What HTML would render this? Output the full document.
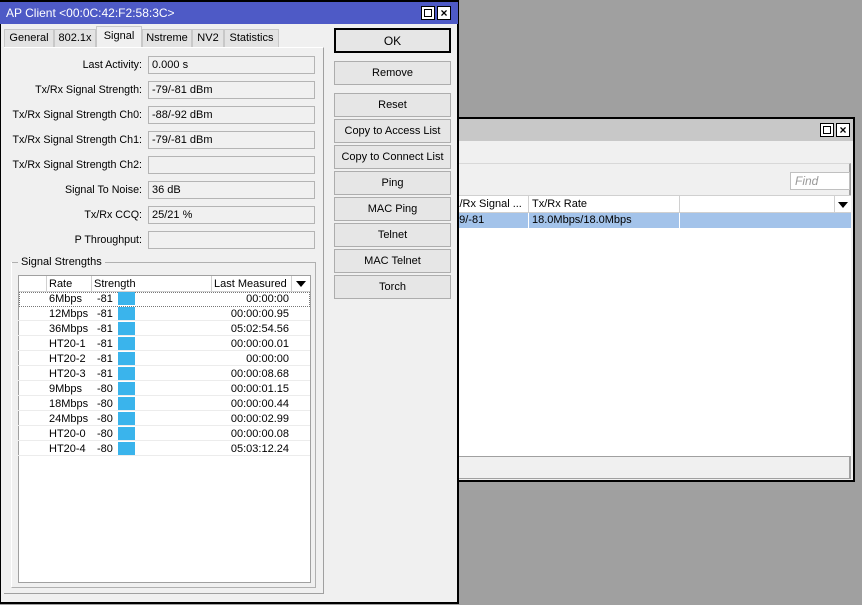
<!DOCTYPE html>
<html><head><meta charset="utf-8"><style>
*{box-sizing:border-box;margin:0;padding:0}
body{width:862px;height:605px;background:#a0a0a0;position:relative;overflow:hidden;font-family:"Liberation Sans",sans-serif;font-size:11px;color:#000}
.a{position:absolute}
.btn{position:absolute;left:333px;width:117px;height:24px;border:1px solid #adadad;background:#e6e6e6;text-align:center;line-height:22px;font-size:11px}
.lbl{position:absolute;right:6px;text-align:right;width:140px;font-size:10.7px;white-space:nowrap}
.fld{position:absolute;left:147px;width:167px;height:18px;border:1px solid #b4b4b4;background:#f0f0f0;padding-left:3px;line-height:16px}
.tb{position:absolute;top:1px;height:18px;border:1px solid #c8c8c8;border-bottom:none;background:#e3e3e3;line-height:17px;text-align:center}
.row{position:absolute;left:1px;width:290px;height:15px;line-height:15px}
.row span{position:absolute;top:1px}
.bar{position:absolute;left:99px;top:1px;width:17px;height:13px;background:#3ab4ec}
.wb{position:absolute;width:14px;height:14px;border:1px solid #000;background:#fff}
</style></head><body>

<!-- second window -->
<div class="a" style="left:446px;top:117px;width:409px;height:365px;background:#f0f0f0;border:2px solid #000">
 <div class="a" style="left:0;top:0;width:405px;height:22px;background:#c8c8c8"></div>
 <div class="wb" style="left:372px;top:4px"><div class="a" style="left:2px;top:2px;width:8px;height:8px;border:1px solid #000"></div></div>
 <div class="wb" style="left:388px;top:4px;font-size:12px;font-weight:bold;line-height:12px;text-align:center">×</div>
 <div class="a" style="left:0;top:44px;width:403px;height:316px;border-right:2px solid #a0a0a0;border-top:1px solid #d8d8d8;border-bottom:1px solid #a0a0a0"></div>
 <div class="a" style="left:342px;top:53px;width:60px;height:18px;border:1px solid #c0c0c0;background:#fff;color:#999;font-style:italic;font-size:12px;padding-left:4px;line-height:16px">Find</div>
 <div class="a" style="left:0;top:76px;width:403px;height:262px;background:#fff;border-bottom:1px solid #a0a0a0">
  <div class="a" style="left:0;top:0;width:403px;height:18px;border-top:1px solid #d0d0d0;border-bottom:1px solid #d0d0d0;background:#fff"></div>
  <div class="a" style="left:6px;top:3px">x/Rx Signal ...</div>
  <div class="a" style="left:80px;top:0;height:18px;border-left:1px solid #d0d0d0"></div>
  <div class="a" style="left:84px;top:3px">Tx/Rx Rate</div>
  <div class="a" style="left:231px;top:0;height:18px;border-left:1px solid #d0d0d0"></div>
  <div class="a" style="left:386px;top:0;height:18px;border-left:1px solid #d0d0d0"></div>
  <div class="a" style="left:390px;top:7px;border-left:5px solid transparent;border-right:5px solid transparent;border-top:6px solid #000"></div>
  <div class="a" style="left:0;top:18px;width:403px;height:15px;background:#a3c3ea"></div>
  <div class="a" style="left:5px;top:19px">79/-81</div>
  <div class="a" style="left:80px;top:18px;height:15px;border-left:1px solid #fff"></div>
  <div class="a" style="left:84px;top:19px">18.0Mbps/18.0Mbps</div>
  <div class="a" style="left:231px;top:18px;height:15px;border-left:1px solid #fff"></div>
 </div>
</div>

<!-- main window -->
<div class="a" style="left:0;top:0;width:459px;height:604px;background:#f0f0f0;border:2px solid #000;border-top:none;border-left:1px solid #000">
 <div class="a" style="left:-1px;top:0;width:458px;height:24px;background:#4e5ac6;border-top:2px solid #000"></div>
 <div class="a" style="left:5px;top:6px;color:#fff;font-size:12px">AP Client &lt;00:0C:42:F2:58:3C&gt;</div>
 <div class="wb" style="left:420px;top:6px"><div class="a" style="left:2px;top:2px;width:8px;height:8px;border:1px solid #000"></div></div>
 <div class="wb" style="left:436px;top:6px;font-size:12px;font-weight:bold;line-height:12px;text-align:center">×</div>

 <div class="a" style="left:3px;top:28px;width:320px;height:22px">
  <div class="tb" style="left:0;width:50px">General</div>
  <div class="tb" style="left:50px;width:42px">802.1x</div>
  <div class="tb" style="left:92px;top:-2px;height:21px;width:46px;background:#f0f0f0;line-height:19px">Signal</div>
  <div class="tb" style="left:138px;width:50px">Nstreme</div>
  <div class="tb" style="left:188px;width:32px">NV2</div>
  <div class="tb" style="left:220px;width:55px">Statistics</div>
 </div>
 <div class="a" style="left:3px;top:47px;width:320px;height:547px;border-right:1px solid #a0a0a0;border-bottom:1px solid #a0a0a0;border-top:1px solid #fff"></div>

 <div class="a" style="left:0;top:56px;width:147px;height:200px">
  <div class="lbl" style="top:3px">Last Activity:</div>
  <div class="lbl" style="top:28px">Tx/Rx Signal Strength:</div>
  <div class="lbl" style="top:53px">Tx/Rx Signal Strength Ch0:</div>
  <div class="lbl" style="top:78px">Tx/Rx Signal Strength Ch1:</div>
  <div class="lbl" style="top:103px">Tx/Rx Signal Strength Ch2:</div>
  <div class="lbl" style="top:128px">Signal To Noise:</div>
  <div class="lbl" style="top:153px">Tx/Rx CCQ:</div>
  <div class="lbl" style="top:178px">P Throughput:</div>
 </div>
 <div class="fld" style="top:56px">0.000 s</div>
 <div class="fld" style="top:81px">-79/-81 dBm</div>
 <div class="fld" style="top:106px">-88/-92 dBm</div>
 <div class="fld" style="top:131px">-79/-81 dBm</div>
 <div class="fld" style="top:156px"></div>
 <div class="fld" style="top:181px">36 dB</div>
 <div class="fld" style="top:206px">25/21 %</div>
 <div class="fld" style="top:231px"></div>

 <div class="a" style="left:10px;top:262px;width:305px;border-top:1px solid #b0b0b0"></div>
 <div class="a" style="left:17px;top:256px;background:#f0f0f0;padding:0 3px">Signal Strengths</div>
 <div class="a" style="left:10px;top:262px;width:305px;height:326px;border-left:1px solid #fff;border-right:1px solid #b0b0b0;border-bottom:1px solid #b0b0b0"></div>

 <div class="a" style="left:17px;top:275px;width:293px;height:308px;background:#fff;border:1px solid #a0a0a0">
  <div class="a" style="left:0;top:0;width:291px;height:16px;border-bottom:1px solid #d0d0d0"></div>
  <div class="a" style="left:27px;top:0;height:16px;border-left:1px solid #d0d0d0"></div>
  <div class="a" style="left:30px;top:2px">Rate</div>
  <div class="a" style="left:72px;top:0;height:16px;border-left:1px solid #d0d0d0"></div>
  <div class="a" style="left:75px;top:2px">Strength</div>
  <div class="a" style="left:192px;top:0;height:16px;border-left:1px solid #d0d0d0"></div>
  <div class="a" style="left:195px;top:2px">Last Measured</div>
  <div class="a" style="left:272px;top:0;height:16px;border-left:1px solid #d0d0d0"></div>
  <div class="a" style="left:277px;top:5px;border-left:5px solid transparent;border-right:5px solid transparent;border-top:6px solid #000"></div>
  <div class="a" style="left:0;top:16px;width:291px;height:15px;border:1px dotted #777"></div>
 </div>
 <div class="a" style="left:17px;top:291px;width:292px">
  <div class="row" style="top:0"><span style="left:30px">6Mbps</span><span style="left:78px">-81</span><div class="bar"></div><span style="right:20px">00:00:00</span></div>
  <div class="row" style="top:15px"><span style="left:30px">12Mbps</span><span style="left:78px">-81</span><div class="bar"></div><span style="right:20px">00:00:00.95</span></div>
  <div class="row" style="top:30px"><span style="left:30px">36Mbps</span><span style="left:78px">-81</span><div class="bar"></div><span style="right:20px">05:02:54.56</span></div>
  <div class="row" style="top:45px"><span style="left:30px">HT20-1</span><span style="left:78px">-81</span><div class="bar"></div><span style="right:20px">00:00:00.01</span></div>
  <div class="row" style="top:60px"><span style="left:30px">HT20-2</span><span style="left:78px">-81</span><div class="bar"></div><span style="right:20px">00:00:00</span></div>
  <div class="row" style="top:75px"><span style="left:30px">HT20-3</span><span style="left:78px">-81</span><div class="bar"></div><span style="right:20px">00:00:08.68</span></div>
  <div class="row" style="top:90px"><span style="left:30px">9Mbps</span><span style="left:78px">-80</span><div class="bar"></div><span style="right:20px">00:00:01.15</span></div>
  <div class="row" style="top:105px"><span style="left:30px">18Mbps</span><span style="left:78px">-80</span><div class="bar"></div><span style="right:20px">00:00:00.44</span></div>
  <div class="row" style="top:120px"><span style="left:30px">24Mbps</span><span style="left:78px">-80</span><div class="bar"></div><span style="right:20px">00:00:02.99</span></div>
  <div class="row" style="top:135px"><span style="left:30px">HT20-0</span><span style="left:78px">-80</span><div class="bar"></div><span style="right:20px">00:00:00.08</span></div>
  <div class="row" style="top:150px"><span style="left:30px">HT20-4</span><span style="left:78px">-80</span><div class="bar"></div><span style="right:20px">05:03:12.24</span></div>
  <div class="a" style="left:0;top:15px;width:292px;height:150px;background:repeating-linear-gradient(to bottom,transparent 0,transparent 14px,#ececec 14px,#ececec 15px);pointer-events:none"></div>
 </div>

 <div class="btn" style="top:28px;height:25px;border:2px solid #000;font-size:12px">OK</div>
 <div class="btn" style="top:61px">Remove</div>
 <div class="btn" style="top:93px">Reset</div>
 <div class="btn" style="top:119px">Copy to Access List</div>
 <div class="btn" style="top:145px">Copy to Connect List</div>
 <div class="btn" style="top:171px">Ping</div>
 <div class="btn" style="top:197px">MAC Ping</div>
 <div class="btn" style="top:223px">Telnet</div>
 <div class="btn" style="top:249px">MAC Telnet</div>
 <div class="btn" style="top:275px">Torch</div>
</div>
</body></html>
